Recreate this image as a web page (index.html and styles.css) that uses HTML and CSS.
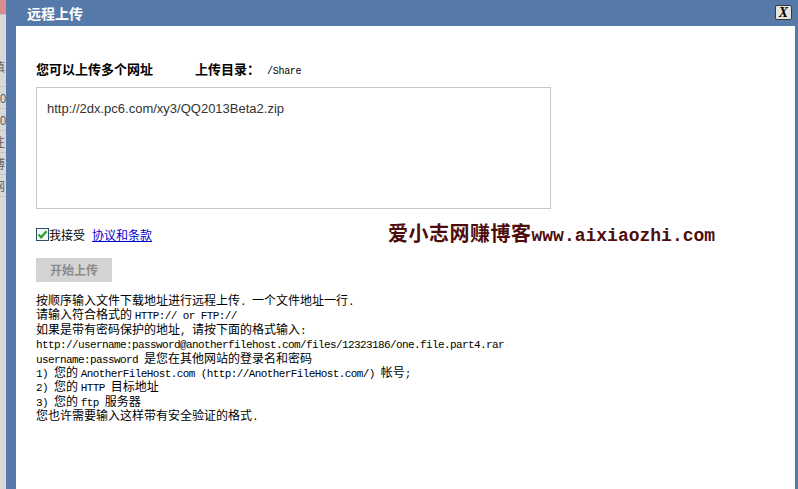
FILE: index.html
```html
<!doctype html>
<html lang="zh-CN">
<head>
    <meta charset="UTF-8">
    <title>远程上传</title>
    <link rel="stylesheet" href="styles.css">
</head>
<body>

<div class="page-edge">
    <span class="edge-top"></span>
    <span class="edge-cell edge-tall">填</span>
    <span class="edge-cell">20</span>
    <span class="edge-cell">20</span>
    <span class="edge-cell">注</span>
    <span class="edge-cell">博</span>
    <span class="edge-cell">网</span>
</div>

<div class="dialog">
    <div class="dialog-title">
        <span class="title-text">远程上传</span>
        <span class="close-btn">X</span>
    </div>
    <div class="dialog-body">
        <div class="head-row">
            <span class="head-label">您可以上传多个网址</span>
            <span class="head-label dir-label">上传目录：</span>
            <span class="dir-path">/Share</span>
        </div>

        <div class="url-box">http://2dx.pc6.com/xy3/QQ2013Beta2.zip</div>

        <div class="agree-row">
            <span class="check">
                <svg width="11" height="11" viewBox="0 0 11 11"><path d="M1.5 5.5 L4.2 8.3 L9.5 2.2" fill="none" stroke="#2aa12a" stroke-width="2.2"/></svg>
            </span>
            <span>我接受</span>
            <a class="terms" href="#">协议和条款</a>
            <span class="watermark">爱小志网赚博客<span class="wm-url">www.aixiaozhi.com</span></span>
        </div>

        <div class="upload-btn">开始上传</div>

        <div class="help">
            <div>按顺序输入文件下载地址进行远程上传<span class="en">. </span>一个文件地址一行<span class="en">.</span></div>
            <div>请输入符合格式的 <span class="en">HTTP:// or FTP://</span></div>
            <div>如果是带有密码保护的地址<span class="en">, </span>请按下面的格式输入<span class="en">:</span></div>
            <div><span class="en">http://username:password@anotherfilehost.com/files/12323186/one.file.part4.rar</span></div>
            <div><span class="en">username:password </span>是您在其他网站的登录名和密码</div>
            <div><span class="en">1) </span>您的 <span class="en">AnotherFileHost.com (http://AnotherFileHost.com/) </span>帐号<span class="en">;</span></div>
            <div><span class="en">2) </span>您的 <span class="en">HTTP </span>目标地址</div>
            <div><span class="en">3) </span>您的 <span class="en">ftp </span>服务器</div>
            <div>您也许需要输入这样带有安全验证的格式<span class="en">.</span></div>
        </div>
    </div>
</div>

</body>
</html>
```

FILE: styles.css
```css
*{
    padding: 0;
    margin: 0;
    box-sizing: border-box;
}

body{
    width: 798px;
    height: 489px;
    overflow: hidden;
    display: flex;
    background: #ffffff;
    font-family: "Noto Sans CJK SC", sans-serif;
    font-size: 12px;
    color: #000;
}

/* page behind the dialog, only a sliver visible */
.page-edge{
    width: 6px;
    flex-shrink: 0;
    background: #d8d8d8;
    display: flex;
    flex-direction: column;
    overflow: hidden;
    font-size: 12px;
    color: #666;
}
.edge-top{
    height: 15px;
    margin-bottom: 14px;
    background: #d98c8c;
    border-bottom: 1px solid #c2c2c2;
}
.edge-cell{
    height: 22px;
    line-height: 22px;
    text-indent: -7px;
    white-space: nowrap;
    border-bottom: 1px solid #c4c4c4;
}
.edge-tall{
    height: 58px;
    padding-top: 27px;
    line-height: 22px;
}

.dialog{
    flex: 1;
    display: flex;
    flex-direction: column;
    background: #ffffff;
    border-left: 10px solid #5579a9;
    border-right: 3px solid #5579a9;
}

.dialog-title{
    height: 26px;
    background: #5579a9;
    display: flex;
    align-items: center;
    justify-content: space-between;
    padding: 0 3px 0 11px;
}
.title-text{
    color: #ffffff;
    font-size: 14px;
    font-weight: bold;
    line-height: 26px;
}
.close-btn{
    width: 17px;
    height: 15px;
    margin-top: -1px;
    border: 1px solid #3a3a3a;
    border-radius: 2px;
    background: #e6e4dc;
    color: #000;
    font-family: "Liberation Serif", serif;
    font-style: italic;
    font-weight: bold;
    font-size: 14px;
    line-height: 13px;
    text-align: center;
}

.dialog-body{
    padding: 33px 0 0 20px;
}

.head-row{
    display: flex;
    align-items: baseline;
    height: 16px;
}
.head-label{
    font-weight: bold;
    font-size: 13px;
}
.dir-label{
    margin-left: 42px;
}
.dir-path{
    margin-left: 7px;
    font-family: "Liberation Mono", monospace;
    font-size: 10px;
    letter-spacing: -0.3px;
}

.url-box{
    margin-top: 12px;
    width: 515px;
    height: 122px;
    border: 1px solid #c8c8c8;
    padding: 13px 10px;
    font-family: "Liberation Sans", Arial, sans-serif;
    font-size: 13px;
    color: #333;
}

.agree-row{
    position: relative;
    display: flex;
    align-items: center;
    margin-top: 18px;
    height: 14px;
}
.check{
    width: 13px;
    height: 13px;
    border: 1px solid #2c4f6e;
    background: #f4f8f4;
    display: flex;
    align-items: center;
    justify-content: center;
}
.terms{
    margin-left: 7px;
    color: #0000cc;
    text-decoration: underline;
}
.watermark{
    position: absolute;
    left: 352px;
    top: -6px;
    color: #4e0c0c;
    font-weight: bold;
    font-size: 20px;
    line-height: 24px;
    white-space: nowrap;
    letter-spacing: 0.5px;
}
.wm-url{
    font-family: "Liberation Mono", monospace;
    font-size: 18px;
    letter-spacing: 0;
}

.upload-btn{
    margin-top: 17px;
    width: 76px;
    height: 24px;
    background: #d4d4d4;
    color: #8a8a8a;
    font-weight: bold;
    font-size: 12px;
    line-height: 24px;
    text-align: center;
}

.help{
    margin-top: 11px;
    white-space: nowrap;
}
.help div{
    height: 14.4px;
    line-height: 14.4px;
}
.en{
    font-family: "Liberation Mono", monospace;
    font-size: 11px;
    line-height: 1;
    letter-spacing: -0.6px;
    white-space: pre;
}
```
